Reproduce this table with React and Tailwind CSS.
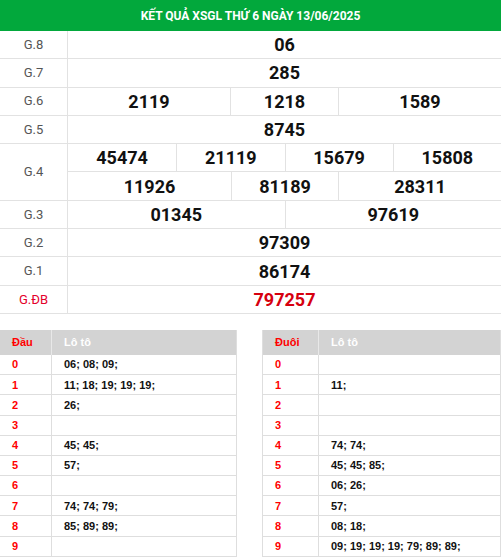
const prizes = [
  { label: "G.8", rows: [["06"]] },
  { label: "G.7", rows: [["285"]] },
  { label: "G.6", rows: [["2119", "1218", "1589"]], cols: "grid-cols-[162fr_108fr_163fr]" },
  { label: "G.5", rows: [["8745"]] },
  {
    label: "G.4",
    rows: [
      ["45474", "21119", "15679", "15808"],
      ["11926", "81189", "28311"],
    ],
  },
  { label: "G.3", rows: [["01345", "97619"]] },
  { label: "G.2", rows: [["97309"]] },
  { label: "G.1", rows: [["86174"]] },
  { label: "G.ĐB", rows: [["797257"]], special: true },
]

const gridFor = (n) => {
  if (n === 1) return "grid-cols-1"
  if (n === 2) return "grid-cols-2"
  if (n === 3) return "grid-cols-[163fr_107fr_163fr]"
  return "grid-cols-4"
}

const dau = [
  "06; 08; 09;",
  "11; 18; 19; 19; 19;",
  "26;",
  "",
  "45; 45;",
  "57;",
  "",
  "74; 74; 79;",
  "85; 89; 89;",
  "",
]

const duoi = [
  "",
  "11;",
  "",
  "",
  "74; 74;",
  "45; 45; 85;",
  "06; 26;",
  "57;",
  "08; 18;",
  "09; 19; 19; 19; 79; 89; 89;",
]

function LotoTable({ title, data, firstCol, width }) {
  return (
    <div className={`${width} border-x border-[#dedede]`}>
      <div className="flex h-[25px] bg-[#d3d3d3] text-[11px] font-bold">
        <div className={`${firstCol} flex items-center pl-[12px] text-[#ff0000] border-r border-[#e8e8e8]`}>{title}</div>
        <div className="flex-1 flex items-center pl-[12px] text-white">Lô tô</div>
      </div>
      {data.map((v, i) => (
        <div key={i} className="flex h-[20.2px] border-b border-[#dedede] text-[11px] font-bold">
          <div className={`${firstCol} flex items-center pl-[12px] text-[#ff0000] border-r border-[#dedede]`}>{i}</div>
          <div className="flex-1 flex items-center pl-[12px] text-[#111]">{v}</div>
        </div>
      ))}
    </div>
  )
}

export default function App() {
  return (
    <div className="w-[501px] h-[557px] overflow-hidden bg-white">
      <div className="font-['Roboto',sans-serif]">
        <div className="h-[31px] bg-[#02a83c] flex items-center justify-center text-white text-[12px] font-bold">
          KẾT QUẢ XSGL THỨ 6 NGÀY 13/06/2025
        </div>
        {prizes.map((p) => (
          <div key={p.label} className="flex border-b border-[#e2e2e2]">
            <div
              className={`w-[68px] shrink-0 flex items-center justify-center border-r border-[#e2e2e2] text-[13px] ${
                p.special ? "text-[#e4002b]" : "text-[#555]"
              }`}
            >
              {p.label}
            </div>
            <div className="flex-1 flex flex-col">
              {p.rows.map((r, ri) => (
                <div
                  key={ri}
                  className={`grid ${p.cols || gridFor(r.length)} ${
                    ri < p.rows.length - 1 ? "h-[28.3px] border-b border-[#e2e2e2]" : "h-[27.3px]"
                  }`}
                >
                  {r.map((n, ci) => (
                    <div
                      key={ci}
                      className={`flex items-center justify-center text-[18px] font-bold ${
                        ci > 0 ? "border-l border-[#e2e2e2]" : ""
                      } ${p.special ? "text-[#d6000f]" : "text-[#111]"}`}
                    >
                      {n}
                    </div>
                  ))}
                </div>
              ))}
            </div>
          </div>
        ))}
      </div>
      <div className="mt-[16px] flex justify-between font-['Liberation_Sans',Arial,sans-serif]">
        <LotoTable title="Đầu" data={dau} firstCol="w-[52px]" width="w-[238px] -ml-px" />
        <LotoTable title="Đuôi" data={duoi} firstCol="w-[56px]" width="w-[239px]" />
      </div>
    </div>
  )
}
